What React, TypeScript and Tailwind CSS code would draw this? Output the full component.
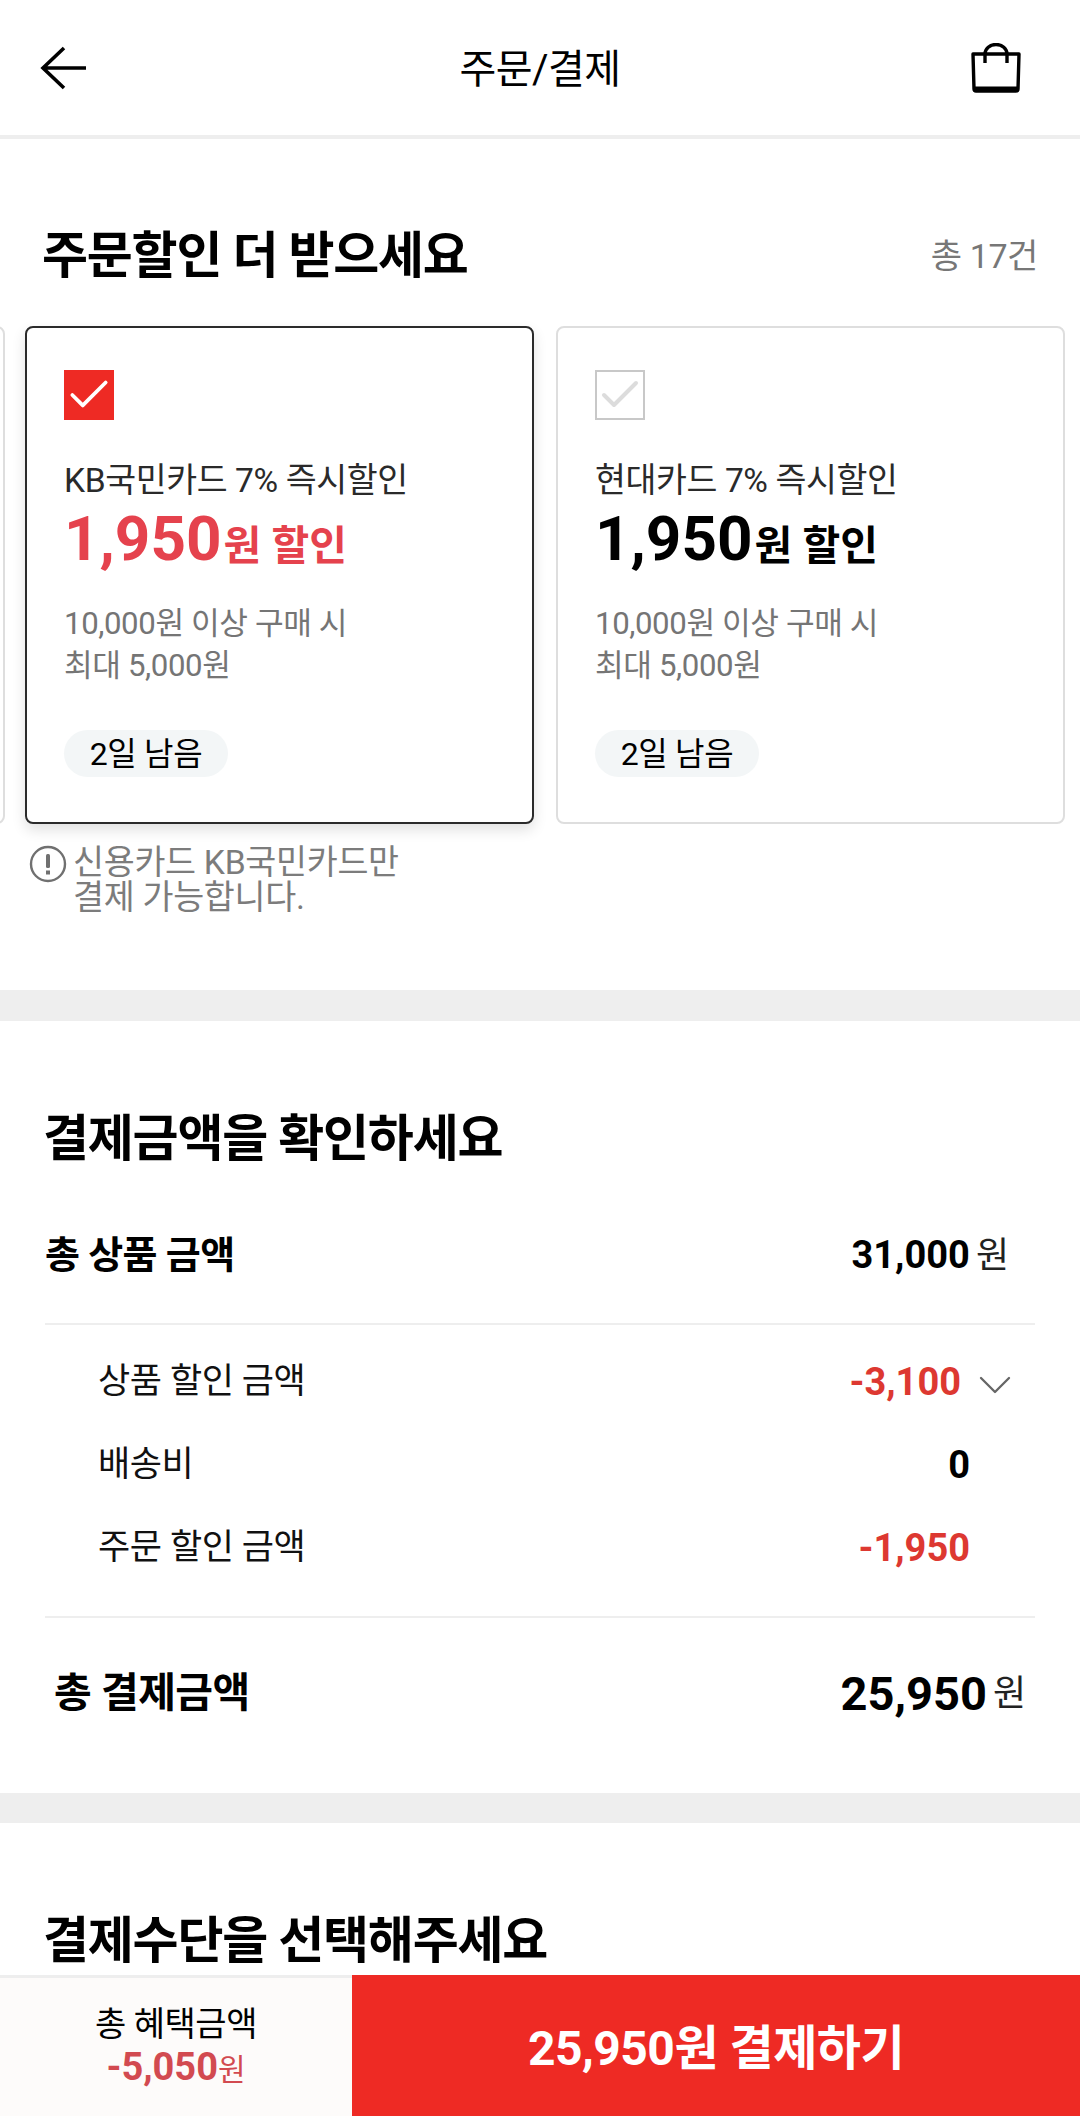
import { ChevronDown, Check } from "lucide-react"

const FONT = "font-['Roboto','Noto_Sans_CJK_KR',sans-serif]"

function CouponCard({
  name,
  selected,
  hidden,
}: {
  name: string
  selected?: boolean
  hidden?: boolean
}) {
  return (
    <div
      className={`relative h-[498px] w-[509px] shrink-0 rounded-[8px] bg-white pl-[37px] pt-[42px] ${
        selected
          ? "border-2 border-[#2b2b2b] shadow-[0_6px_14px_rgba(0,0,0,0.12)]"
          : "border-2 border-[#dedede]"
      }`}
    >
      {!hidden && (
        <>
          {selected ? (
            <div className="flex h-[50px] w-[50px] items-center justify-center bg-[#ee2a24]">
              <Check className="h-[50px] w-[50px] shrink-0 text-white" strokeWidth={1.8} />
            </div>
          ) : (
            <div className="flex h-[50px] w-[50px] items-center justify-center border-2 border-[#c8c8c8] bg-white">
              <Check className="h-[48px] w-[48px] shrink-0 text-[#dcdcdc]" strokeWidth={2} />
            </div>
          )}
          <p className="mt-[38px] text-[33.6px] leading-[46px] tracking-[-0.4px] text-[#2a2a2a]">{name}</p>
          <p
            className={`mt-[3px] flex items-baseline font-bold leading-[64px] ${
              selected ? "text-[#e5424d]" : "text-black"
            }`}
          >
            <span className="text-[62px]">1,950</span>
            <span className="ml-[2px] text-[41px]">원 할인</span>
          </p>
          <p className="mt-[25px] text-[31.2px] leading-[42px] tracking-[-0.4px] text-[#757575]">
            10,000원 이상 구매 시
            <br />
            최대 5,000원
          </p>
          <div className="mt-[43px] flex h-[47px] w-[164px] items-center justify-center rounded-full bg-[#f3f6f7] text-[32px] tracking-[-0.3px] text-black">
            2일 남음
          </div>
        </>
      )}
    </div>
  )
}

function PriceRow({ label, value, red, chevron }: { label: string; value: string; red?: boolean; chevron?: boolean }) {
  return (
    <div className="flex h-[83px] items-center justify-between pl-[53px]">
      <span className="text-[35px] tracking-[-0.4px] text-[#111]">{label}</span>
      <div className={`relative ${chevron ? "pr-[74px]" : "pr-[65px]"}`}>
        <span className={`text-[38px] font-bold ${red ? "text-[#dd3831]" : "text-black"}`}>{value}</span>
        {chevron && (
          <ChevronDown
            className="absolute right-[12px] top-[3px] h-[56px] w-[56px] text-[#666]"
            strokeWidth={1}
          />
        )}
      </div>
    </div>
  )
}

export default function App() {
  return (
    <div className={`flex h-[2116px] w-[1080px] flex-col overflow-hidden bg-white ${FONT}`}>
      {/* Header */}
      <header className="relative flex h-[139px] shrink-0 items-center justify-between border-b-[4px] border-[#eeeeee] pl-[39px] pr-[59px]">
        <svg viewBox="0 0 48 44" className="h-[44px] w-[48px] fill-none stroke-black" strokeWidth="3.6">
          <path d="M47 22H5M25 2 4 22l21 20" />
        </svg>
        <h1 className="absolute left-0 right-0 top-[40px] text-center text-[40px] tracking-[-0.5px] text-black">
          주문/결제
        </h1>
        <svg viewBox="0 0 50 50" className="h-[50px] w-[50px] fill-none stroke-black" strokeWidth="3.4">
          <path d="M2 11h46l-1 35q0 2-2 2H5q-2 0-2-2z" strokeLinejoin="round" />
          <path d="M14 20V11a11 9.5 0 0 1 22 0v9" />
          <path d="M4 46h42" strokeWidth="5" />
        </svg>
      </header>

      <main className="flex-1 overflow-hidden">
        {/* 주문할인 */}
        <section className="h-[851px] pt-[88px]">
          <div className="flex items-center justify-between px-[42px]">
            <h2 className="text-[50px] font-bold leading-[58px] tracking-[-1.2px] text-black">주문할인 더 받으세요</h2>
            <span className="text-[34px] tracking-[-0.4px] text-[#777]">총 17건</span>
          </div>
          <div className="ml-[-504px] mt-[41px] flex gap-[20px]">
            <CouponCard name="" hidden />
            <div className="mr-[2px]">
              <CouponCard name="KB국민카드 7% 즉시할인" selected />
            </div>
            <CouponCard name="현대카드 7% 즉시할인" />
          </div>
          <div className="mt-[21px] flex pl-[29px]">
            <svg viewBox="0 0 38 38" className="h-[38px] w-[38px] shrink-0 text-[#707070]">
              <circle cx="19" cy="19" r="17" fill="none" stroke="currentColor" strokeWidth="2.4" />
              <rect x="17" y="9" width="4" height="14" rx="1.5" fill="currentColor" />
              <rect x="17" y="25.5" width="4" height="4" fill="currentColor" />
            </svg>
            <p className="ml-[6px] text-[33.7px] leading-[35px] tracking-[-0.3px] text-[#7c7c7c]">
              신용카드 KB국민카드만
              <br />
              결제 가능합니다.
            </p>
          </div>
        </section>

        <div className="h-[31px] bg-[#eeeeee]" />

        {/* 결제금액 */}
        <section className="h-[772px] pt-[88px]">
          <h2 className="pl-[43px] text-[50px] font-bold leading-[60px] tracking-[-1.2px] text-black">
            결제금액을 확인하세요
          </h2>
          <div className="mx-[45px] mt-[27px]">
            <div className="flex h-[129px] items-center justify-between border-b-2 border-[#eeeeee] pb-[8px]">
              <span className="text-[38px] font-bold tracking-[-0.6px] text-black">총 상품 금액</span>
              <div className="flex items-center gap-[6px] pr-[26px]">
                <span className="text-[38px] font-bold text-black">31,000</span>
                <span className="text-[36px] text-[#222]">원</span>
              </div>
            </div>
            <div className="border-b-2 border-[#eeeeee] pb-[26px] pt-[16px]">
              <PriceRow label="상품 할인 금액" value="-3,100" red chevron />
              <PriceRow label="배송비" value="0" />
              <PriceRow label="주문 할인 금액" value="-1,950" red />
            </div>
            <div className="flex h-[152px] items-center justify-between pl-[9px]">
              <span className="text-[41px] font-bold tracking-[-0.5px] text-black">총 결제금액</span>
              <div className="flex items-center gap-[6px] pr-[9px]">
                <span className="text-[47px] font-bold text-black">25,950</span>
                <span className="text-[36px] text-[#222]">원</span>
              </div>
            </div>
          </div>
        </section>

        <div className="h-[30px] bg-[#eeeeee]" />

        {/* 결제수단 */}
        <section className="pt-[88px]">
          <h2 className="pl-[43px] text-[50px] font-bold leading-[60px] tracking-[-1.2px] text-black">
            결제수단을 선택해주세요
          </h2>
        </section>
      </main>

      {/* Bottom bar */}
      <footer className="flex h-[141px] shrink-0">
        <div className="flex w-[352px] flex-col items-center justify-center border-t-[3px] border-[#eeeeee] bg-[#fdfbfa] pb-[2px]">
          <span className="text-[34px] leading-[46px] tracking-[-0.5px] text-black">총 혜택금액</span>
          <span className="-mt-[2px] flex items-baseline leading-[44px] text-[#d24a50]">
            <span className="text-[38px] font-bold">-5,050</span>
            <span className="text-[30px]">원</span>
          </span>
        </div>
        <button className="flex flex-1 items-center justify-center bg-[#ee2a24] pt-[6px] text-[48px] font-bold tracking-[-0.5px] text-white">
          25,950원 결제하기
        </button>
      </footer>
    </div>
  )
}
